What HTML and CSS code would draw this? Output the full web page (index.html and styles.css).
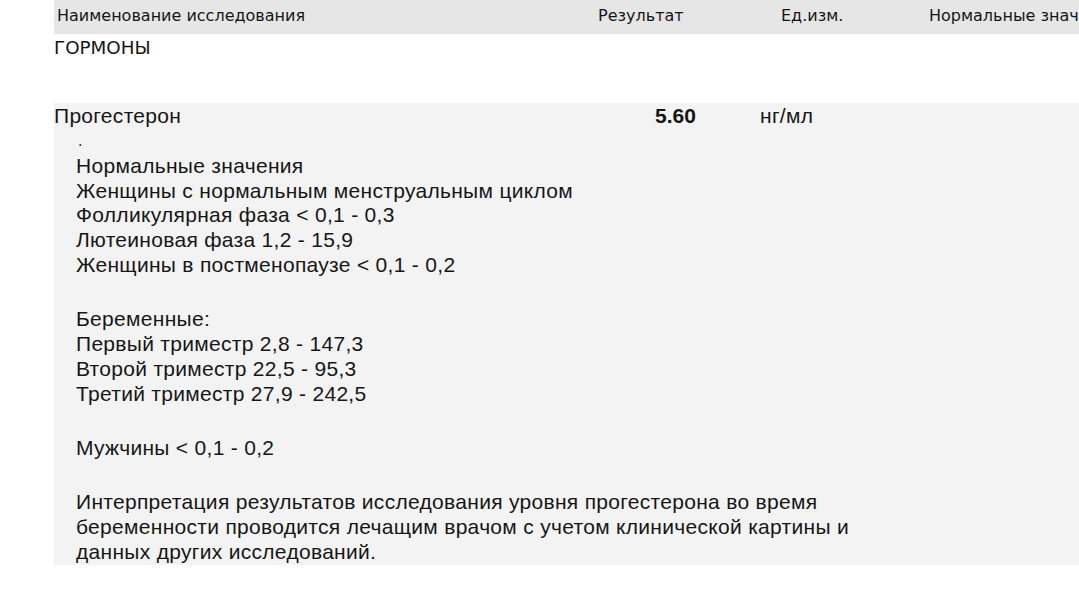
FILE: index.html
```html
<!DOCTYPE html>
<html lang="ru">
<head>
<meta charset="utf-8">
<link rel="stylesheet" href="styles.css">
</head>
<body>
<div class="report">
  <div class="head-row">
    <div class="col-name">Наименование исследования</div>
    <div class="col-result">Результат</div>
    <div class="col-unit">Ед.изм.</div>
    <div class="col-norm">Нормальные значения</div>
  </div>
  <div class="group-title">ГОРМОНЫ</div>
  <div class="test-row">
    <div class="test-line">
      <div class="t-name">Прогестерон</div>
      <div class="t-result">5.60</div>
      <div class="t-unit">нг/мл</div>
    </div>
    <div class="comment">
      <p class="dot">.</p>
      <p>Нормальные значения<br>Женщины с нормальным менструальным циклом<br>Фолликулярная фаза &lt; 0,1 - 0,3<br>Лютеиновая фаза 1,2 - 15,9<br>Женщины в постменопаузе &lt; 0,1 - 0,2</p>
      <p>Беременные:<br>Первый триместр 2,8 - 147,3<br>Второй триместр 22,5 - 95,3<br>Третий триместр 27,9 - 242,5</p>
      <p>Мужчины &lt; 0,1 - 0,2</p>
      <p>Интерпретация результатов исследования уровня прогестерона во время<br>беременности проводится лечащим врачом с учетом клинической картины и<br>данных других исследований.</p>
    </div>
  </div>
</div>
</body>
</html>
```
FILE: styles.css
```css
html, body {
  margin: 0;
  padding: 0;
  background: #ffffff;
  overflow: hidden;
}
body {
  width: 1079px;
  height: 600px;
  color: #161616;
}
.report {
  margin-left: 54px;
}
.head-row {
  display: flex;
  align-items: center;
  box-sizing: border-box;
  height: 34px;
  padding-bottom: 3px;
  background: #e6e6e6;
  font-family: "DejaVu Sans", sans-serif;
  font-size: 16px;
  white-space: nowrap;
  overflow: hidden;
}
.head-row > div { flex: none; }
.col-name { width: 541px; padding-left: 3px; }
.col-result { width: 183px; }
.col-unit { width: 148px; }
.group-title {
  font-family: "DejaVu Sans", sans-serif;
  font-size: 18.3px;
  line-height: 27px;
  height: 69px;
}
.test-row {
  background: #f3f3f3;
  font-family: "Liberation Sans", Arial, sans-serif;
  font-size: 21px;
  letter-spacing: 0.3px;
  padding-bottom: 0;
}
.test-line {
  display: flex;
  height: 26px;
  line-height: 26px;
}
.t-name { width: 601px; flex: none; }
.t-result { width: 105px; flex: none; font-weight: bold; letter-spacing: 0; }
.comment {
  padding-left: 22px;
  line-height: 24.8px;
}
.comment p {
  margin: 0 0 29.5px 0;
}
.comment p:last-child { margin-bottom: 0; }
.comment .dot {
  margin: 0;
  font-size: 16px;
  padding-left: 2px;
}
```
